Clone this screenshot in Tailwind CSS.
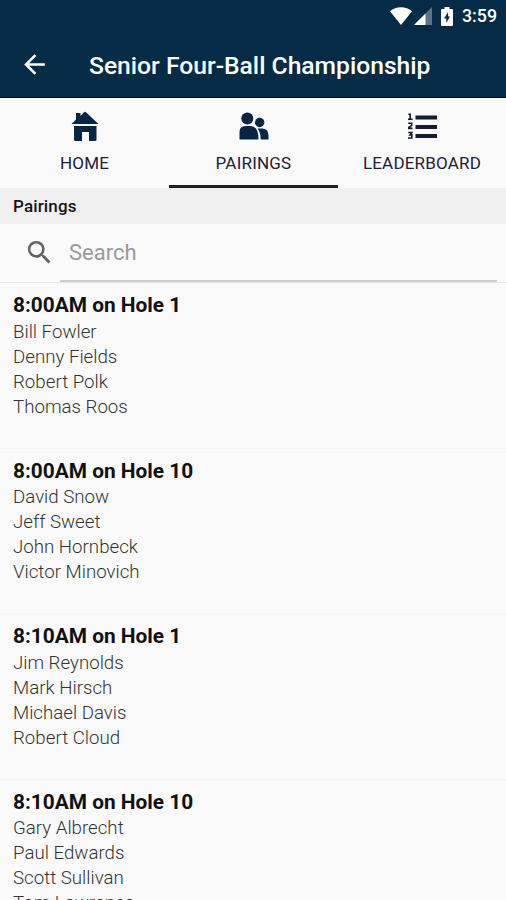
<!DOCTYPE html>
<html lang="en">
<head>
    <meta charset="UTF-8">
    <title>Senior Four-Ball Championship</title>
    <meta name="viewport" content="width=device-width, initial-scale=1.0">
    <script src="https://cdn.jsdelivr.net/npm/@tailwindcss/browser@4"></script>
</head>
<body class="h-[900px] overflow-hidden bg-[#fafafa] font-['Roboto',sans-serif]">
    <!-- Status bar + app bar -->
    <header class="h-[98px] bg-[#062b46] text-white border-b border-[#020b14]">
        <div class="h-8 flex items-center justify-end pr-[9px]">
            <svg class="w-[22px] h-[18px]" viewBox="0 0 22 18" fill="#fff"><path d="M11 18 0 4.200C6-1.200 16-1.200 22 4.200Z"/></svg>
            <svg class="w-[18px] h-[18px] ml-[2px]" viewBox="0 0 18 18" fill="#fff"><path fill-opacity=".35" d="M0 18 18 0V18Z"/><path d="M0 18 11.500 6.500V18Z"/></svg>
            <svg class="w-3 h-[19px] ml-[9px]" viewBox="0 0 12 19"><path fill="#fff" d="M3.500 0h5v2H11q1 0 1 1v15q0 1-1 1H1q-1 0-1-1V3q0-1 1-1h2.500Z"/><path fill="#062b46" d="M7 5 3 11.500h2.300V16L9 9.500H7Z"/></svg>
            <span class="ml-[9px] text-[17.800px] font-medium">3:59</span>
        </div>
        <div class="h-[65px] flex items-center">
            <svg class="w-[31px] h-[31px] ml-[19px]" viewBox="0 0 24 24" fill="#fff"><path d="M20 11H7.830l5.590-5.590L12 4l-8 8 8 8 1.410-1.410L7.830 13H20v-2z"/></svg>
            <h1 class="ml-[39px] pt-[3px] text-[24.650px] font-medium whitespace-nowrap">Senior Four-Ball Championship</h1>
        </div>
    </header>

    <!-- Tabs -->
    <nav class="h-[90px] grid grid-cols-[169px_169px_168px] text-[17px] tracking-[0.2px] text-[#1b2137]">
        <a class="flex flex-col items-center pt-[13px]">
            <svg class="w-7 h-[30px]" viewBox="0 0 28 30" fill="#062642"><path d="M5 8.500V2h4.500v3L13 1.200q1-.8 2 0L27.500 13H.5Z"/><path d="M3 15h22.500v13.500q0 1.500-1.500 1.500h-6V21h-7v9H4.500Q3 30 3 28.500Z"/></svg>
            <span class="mt-[10px] leading-6">HOME</span>
        </a>
        <a class="flex flex-col items-center pt-[13px] border-b-[3px] border-[#1d2024]">
            <svg class="w-[30px] h-[30px]" viewBox="0 0 30 30" fill="#062642"><circle cx="8.300" cy="7.500" r="6"/><circle cx="20.700" cy="11.500" r="4.700"/><path d="M.5 28.500V21q0-6 6-6h5q8 0 8 13.500ZM18.500 17.500h4.500q6.500 0 6.500 7v4h-7.800q0-7-3.200-11Z"/></svg>
            <span class="mt-[10px] leading-6">PAIRINGS</span>
        </a>
        <a class="flex flex-col items-center pt-[13px]">
            <svg class="w-[30px] h-[30px]" viewBox="0 0 30 30" fill="#141c33"><path d="M8.500 4.500H30v4H8.500ZM8.500 14H30v4H8.500ZM8.500 23H30v4H8.500Z"/><path fill="none" stroke="#141c33" stroke-width="1.600" d="M1.300 3.300h1.900v5M1 8.200h4.600M1.200 12.200h3.500v2.200L1.800 16.500v.9h3.700M1.200 21.500h3.600l-1.800 2.400h1.800v3.100H1"/></svg>
            <span class="mt-[10px] leading-6">LEADERBOARD</span>
        </a>
    </nav>

    <div class="h-9 flex items-center bg-[#f0f0f0] px-[13px] pt-px text-[17px] tracking-[0.150px] font-medium text-[#151515]">Pairings</div>

    <!-- Search -->
    <div class="h-[59px] flex border-b border-[#e7e7e7]">
        <div class="w-[60px] shrink-0 pt-[13px] pl-[24px]">
            <svg class="w-[31px] h-[31px]" viewBox="0 0 24 24" fill="#636363"><path d="M15.500 14h-.79l-.28-.27A6.471 6.471 0 0 0 16 9.500 6.500 6.500 0 1 0 9.500 16c1.610 0 3.090-.59 4.230-1.570l.27.28v.79l5 4.990L20.490 19l-4.990-5zm-6 0C7.010 14 5 11.990 5 9.500S7.010 5 9.500 5 14 7.010 14 9.500 11.990 14 9.500 14z"/></svg>
        </div>
        <input class="flex-1 min-w-0 mr-[9px] pl-[9px] pt-px text-[22px] border-b-2 border-[#cecece] outline-none placeholder:text-[#999]" type="text" placeholder="Search">
    </div>

    <!-- Tee times -->
    <ul class="text-[18.700px] leading-[25px] font-light text-[#333]">
        <li class="h-[165.500px] pt-[9px] px-[13px] border-b border-[#f6f6f6]">
            <h2 class="text-[20.850px] leading-[26px] mb-[1.500px] font-bold text-[#111]">8:00AM on Hole 1</h2>
            <p>Bill Fowler</p>
            <p>Denny Fields</p>
            <p>Robert Polk</p>
            <p>Thomas Roos</p>
        </li>
        <li class="h-[165.500px] pt-[9px] px-[13px] border-b border-[#f6f6f6]">
            <h2 class="text-[20.850px] leading-[26px] mb-[1.500px] font-bold text-[#111]">8:00AM on Hole 10</h2>
            <p>David Snow</p>
            <p>Jeff Sweet</p>
            <p>John Hornbeck</p>
            <p>Victor Minovich</p>
        </li>
        <li class="h-[165.500px] pt-[9px] px-[13px] border-b border-[#f6f6f6]">
            <h2 class="text-[20.850px] leading-[26px] mb-[1.500px] font-bold text-[#111]">8:10AM on Hole 1</h2>
            <p>Jim Reynolds</p>
            <p>Mark Hirsch</p>
            <p>Michael Davis</p>
            <p>Robert Cloud</p>
        </li>
        <li class="h-[165.500px] pt-[9px] px-[13px] border-b border-[#f6f6f6]">
            <h2 class="text-[20.850px] leading-[26px] mb-[1.500px] font-bold text-[#111]">8:10AM on Hole 10</h2>
            <p>Gary Albrecht</p>
            <p>Paul Edwards</p>
            <p>Scott Sullivan</p>
            <p>Tom Lawrence</p>
        </li>
    </ul>
</body>
</html>
